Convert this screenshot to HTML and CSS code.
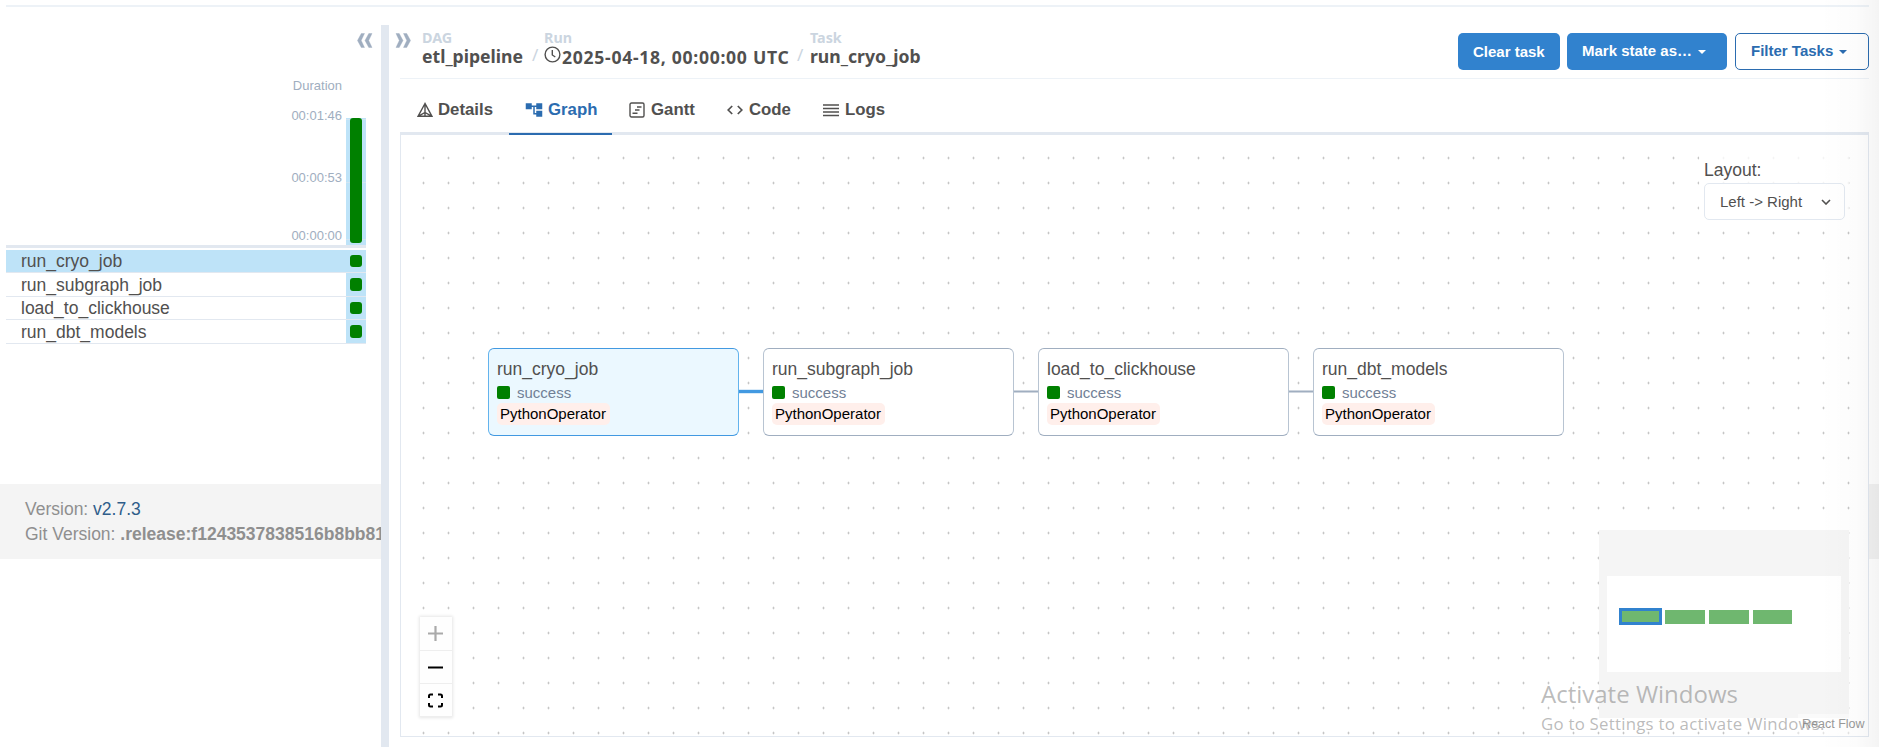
FILE: index.html
```html
<!DOCTYPE html>
<html lang="en">
<head>
<meta charset="utf-8">
<title>etl_pipeline - Graph</title>
<link rel="stylesheet" href="styles.css">
</head>
<body>
<div class="page">
  <div class="top-rule"></div>
  <div class="split">
    <aside class="side">
      <div class="collapse"><svg class="ico-collapse" viewBox="0 0 16 15"><path d="M7.500 .5H4.300L.5 7.500 4.300 14.500H7.500L4.200 7.500zM15 .5H11.800L8 7.500 11.800 14.500H15L11.700 7.500z"/></svg></div>
      <div class="grid-head">
        <div class="durations"><span class="d-title">Duration</span><span class="d-max">00:01:46</span><span class="d-mid">00:00:53</span><span class="d-min">00:00:00</span></div>
        <div class="run-col"><div class="run-bar"></div></div>
      </div>
      <div class="task-list">
        <div class="task selected"><span>run_cryo_job</span><i><b></b></i></div>
        <div class="task low"><span>run_subgraph_job</span><i><b></b></i></div>
        <div class="task"><span>load_to_clickhouse</span><i><b></b></i></div>
        <div class="task low"><span>run_dbt_models</span><i><b></b></i></div>
      </div>
      <footer class="footer"><p>Version: <a>v2.7.3</a></p><p>Git Version: <strong>.release:f1243537838516b8bb81</strong></p></footer>
    </aside>
    <div class="divider"></div>
    <main class="main">
      <header class="header">
        <svg class="ico-expand" viewBox="0 0 16 15"><path d="M1 .5H4.200L8 7.500 4.200 14.500H1L4.300 7.500zM8.500 .5H11.700L15.500 7.500 11.700 14.500H8.500L11.800 7.500z"/></svg>
        <div class="crumb crumb-dag"><small>DAG</small><span>etl_pipeline</span></div>
        <span class="slash">/</span>
        <div class="crumb crumb-run"><small>Run</small><span class="run-date"><svg class="ico-clock" viewBox="0 0 17 17"><circle cx="8.5" cy="8.5" r="7.4"/><path d="M8.3 4v5l3 2"/></svg>2025-04-18, 00:00:00 UTC</span></div>
        <span class="slash">/</span>
        <div class="crumb crumb-task"><small>Task</small><span>run_cryo_job</span></div>
        <div class="actions">
          <button class="btn clear">Clear task</button>
          <button class="btn mark">Mark state as…<i class="caret"></i></button>
          <button class="btn filter">Filter Tasks<i class="caret"></i></button>
        </div>
      </header>
      <nav class="tabs">
        <div class="tab t-details"><svg viewBox="0 0 16 16" class="line"><path d="M8 1.500 1 14.300h14zM8 2v12M1 14.300 8 10.500l7 3.800"/></svg>Details</div>
        <div class="tab t-graph active"><svg viewBox="0 0 24 24"><path d="M23 11V3h-8v3H9V3H1v8h8V8h2v10h4v3h8v-8h-8v3h-2V8h2v3z"/></svg>Graph</div>
        <div class="tab t-gantt"><svg viewBox="0 0 16 16" class="line"><rect x="1" y="1" width="14" height="14" rx="1.5"/><path d="M8 5h4.500M6 8h4.500M3.500 11.300h5"/></svg>Gantt</div>
        <div class="tab t-code"><svg viewBox="0 0 16 16" class="line thick"><path d="M5.200 4 1.200 8l4 4M10.800 4l4 4-4 4"/></svg>Code</div>
        <div class="tab t-logs"><svg viewBox="0 0 16 16" class="line"><path d="M0 3h16M0 6.500h16M0 10h16M0 13.500h16"/></svg>Logs</div>
      </nav>
      <section class="canvas">
        <svg class="edges"><path class="edge on" d="M336.500 256.500h27"/><path class="edge" d="M611 256.500h27M886 256.500h27"/></svg>
        <div class="node n1"><h4>run_cryo_job</h4><p><b></b>success</p><em>PythonOperator</em></div>
        <div class="node n2"><h4>run_subgraph_job</h4><p><b></b>success</p><em>PythonOperator</em></div>
        <div class="node n3"><h4>load_to_clickhouse</h4><p><b></b>success</p><em>PythonOperator</em></div>
        <div class="node n4"><h4>run_dbt_models</h4><p><b></b>success</p><em>PythonOperator</em></div>
        <div class="layout"><label>Layout:</label><div class="select">Left -&gt; Right<svg viewBox="0 0 10 6"><path d="M1 1l4 4 4-4"/></svg></div></div>
        <div class="controls">
          <span><svg viewBox="0 0 15 15"><path class="plus" d="M0 7.500h15M7.500 0v15"/></svg></span>
          <span><svg viewBox="0 0 15 15"><path d="M0 7.500h15"/></svg></span>
          <span><svg viewBox="0 0 15 15"><path d="M1 5V3Q1 1.500 2.500 1.500H5M10 1.500h2.500Q14 1.500 14 3V5M14 10v2Q14 13.500 12.500 13.500H10M5 13.500H2.500Q1 13.500 1 12V10"/></svg></span>
        </div>
        <svg class="minimap" viewBox="0 0 250 188"><rect class="mask" width="250" height="188"/><rect class="view" x="8" y="46" width="234" height="96"/><rect class="mn cur" x="21.500" y="79.500" width="40" height="14"/><rect class="mn" x="66" y="80" width="40" height="14"/><rect class="mn" x="110" y="80" width="40" height="14"/><rect class="mn" x="154" y="80" width="39" height="14"/></svg>
        <div class="attribution">React Flow</div>
      </section>
    </main>
  </div>
  <div class="edge-shade"></div>
  <div class="footer-edge"></div>
  <div class="watermark"><div>Activate Windows</div><p>Go to Settings to activate Windows.</p></div>
</div>
</body>
</html>
```
FILE: styles.css
```css
* { box-sizing: border-box; }
body { margin: 0; background: #fff; color: #51504f; font-family: "Liberation Sans", Arial, sans-serif; font-size: 17.5px; }
p, h4 { margin: 0; font-weight: 400; }
svg { display: block; fill: none; }
.page { position: relative; width: 1879px; height: 747px; overflow: hidden; padding-top: 5px; }
.top-rule { height: 2px; margin: 0 10px 18px 6px; background: #edf2f7; }
.split { display: flex; height: 722px; }

.side { width: 381px; overflow: hidden; flex: none; }
.collapse { padding: 8px 8px 0 0; height: 53px; display: flex; justify-content: flex-end; }
.ico-collapse, .ico-expand { width: 16px; height: 15px; flex: none; fill: #a0aec0; stroke: #a0aec0; stroke-width: .4; }
.grid-head { display: flex; width: 360px; height: 170px; margin-left: 6px; border-bottom: 3px solid #e2e8f0; }
.durations { width: 336px; display: flex; flex-direction: column; align-items: flex-end; font-size: 13px; line-height: 16px; color: #a0aec0; }
.d-max { margin-top: 14px; }
.d-mid { margin-top: 46px; }
.d-min { margin-top: 42px; }
.run-col { width: 20px; height: 127px; margin: 40px 0 0 4px; padding: 0 4px; background: linear-gradient(#d2e5f2, #d2e5f2) 0 1px / 100% 1px no-repeat, linear-gradient(#d2e5f2, #d2e5f2) 0 64px / 100% 1px no-repeat, linear-gradient(#d2e5f2, #d2e5f2) 0 121px / 100% 1px no-repeat, #bee3f8; }
.run-bar { height: 125px; border-radius: 3px; background: green; }
.task-list { width: 360px; margin: 2px 0 0 6px; display: grid; grid-template-rows: 23px 24px 23px 24px; }
.task { display: flex; justify-content: space-between; border-bottom: 1px solid #e2e8f0; padding-left: 15px; line-height: 22px; }
.task i { width: 20px; padding: 5px 4px; background: #bee3f8; }
.task b { display: block; height: 12px; border-radius: 3px; background: green; }
.low { line-height: 24px; }
.low b { height: 13px; }
.selected { background: #bee3f8; }
.footer { height: 75px; margin-top: 140px; padding: 13px 25px 12px; background: #f4f4f4; color: #8f8f8f; line-height: 25px; white-space: nowrap; }
.footer a { color: #2f5d8a; }
.divider { width: 8px; flex: none; background: #e2e8f0; }

.main { width: 1480px; padding-left: 11px; }
.header { position: relative; height: 54px; display: flex; align-items: flex-start; border-bottom: 1px solid #edf2f7; font-family: "Noto Sans", "Open Sans", sans-serif; }
.ico-expand { margin: 8px 0 0 -5px; }
.crumb { height: 45px; padding-top: 4px; font-weight: 700; font-size: 17.6px; white-space: nowrap; }
.crumb small { display: block; height: 15px; font-size: 14.3px; line-height: 18px; color: #cbd5e0; }
.crumb > span { display: flex; line-height: 24px; }
.crumb-dag { margin-left: 11px; width: 110px; }
.crumb-run { width: 253px; margin-left: 3px; }
.run-date { padding-top: 1px; letter-spacing: .7px; }
.crumb-task { margin-left: 4px; }
.slash { width: 9px; padding-top: 18px; line-height: 24px; font-size: 17px; color: #cbd5e0; }
.ico-clock { width: 17px; height: 17px; margin: 1px 1px 0 0; stroke: #51504f; stroke-width: 1.4; flex: none; }
.actions { display: flex; margin: 8px 0 0 auto; }
.btn { height: 37px; border: 0; border-radius: 5px; padding: 0 0 2px; background: #3182ce; color: #fff; font: bold 15px "Liberation Sans", Arial, sans-serif; white-space: nowrap; display: flex; align-items: center; }
.clear { width: 102px; padding: 0 0 0 15px; }
.mark { width: 160px; margin-left: 7px; padding-left: 15px; }
.filter { width: 134px; margin-left: 8px; padding-left: 15px; border: 1px solid #2b6cb0; background: #fff; color: #2b6cb0; }
.caret { margin: 2px 0 0 6px; border: 4.500px solid transparent; border-top-color: currentColor; border-bottom: 0; }

.tabs { display: flex; height: 56px; border-bottom: 3px solid #e2e8f0; font-weight: bold; font-size: 16.8px; }
.tab { display: flex; align-items: center; gap: 5px; height: 56px; padding: 5px 15px 0; white-space: nowrap; }
.tab svg { width: 16px; height: 16px; margin-top: 1px; fill: currentColor; flex: none; }
.tab svg.line { fill: none; stroke: currentColor; stroke-width: 1.4; }
.tab svg.thick { stroke-width: 1.7; }
.t-details { width: 109px; padding-left: 17px; }
.t-graph { width: 103px; }
.tab.t-graph { padding-left: 16px; }
.t-graph svg { width: 18px; height: 18px; }
.t-gantt { width: 98px; padding-left: 17px; gap: 6px; }
.t-code { width: 96px; padding-left: 17px; gap: 6px; }
.t-logs { padding-left: 17px; gap: 6px; }
.active { color: #2b6cb0; border-bottom: 2px solid #2b6cb0; padding-top: 7px; }

.canvas { position: relative; width: 1469px; height: 602px; border: 1px solid #e2e8f0; border-top: 0; background: radial-gradient(circle, #adadad 0.700px, transparent 1.200px) 10px 10.500px / 25px 25px; }
.edges { position: absolute; left: 0; top: 0; width: 1467px; height: 600px; }
.edge { stroke: #a0aec0; stroke-width: 2; }
.edge.on { stroke: #4299e1; stroke-width: 3.4; }
.node { position: absolute; top: 213px; width: 251px; height: 88px; border: 1px solid #a0aec0; border-color: #a0aec0 #b8c4d2; border-radius: 6px; padding: 8px; background: #fff; }
.n1 { left: 87px; background: #ebf8ff; border-color: #4299e1 #63b3ed; }
.n2 { left: 362px; }
.n3 { left: 637px; }
.n4 { left: 912px; }
.node h4 { font-size: 17.500px; line-height: 24px; }
.node p { display: flex; align-items: center; height: 22px; padding-top: 1px; gap: 7px; font-size: 15px; color: #718096; }
.node b { width: 13px; height: 13px; margin-top: -1px; border-radius: 2px; background: green; }
.node em { display: inline-block; font-style: normal; font-size: 15px; line-height: 22px; padding: 0 4px 0 3px; border-radius: 5px; background: #ffefeb; color: #000; vertical-align: top; }
.layout { position: absolute; left: 1298px; top: 15px; width: 150px; height: 75px; padding: 9px 5px; background: rgba(255,255,255,.8); }
.layout label { display: block; height: 24px; line-height: 22px; }
.select { width: 141px; height: 37px; border: 1px solid #e2e8f0; border-radius: 5px; padding: 0 13px 0 15px; display: flex; align-items: center; justify-content: space-between; font-size: 15px; background: #fff; }
.select svg { width: 10px; height: 6px; stroke: #51504f; stroke-width: 1.6; }
.controls { position: absolute; left: 18.500px; top: 482px; width: 32px; box-shadow: 0 0 3px 1px rgba(0,0,0,.1); }
.controls span { display: flex; align-items: center; justify-content: center; height: 33px; background: #fefefe; border-bottom: 1px solid #eee; }
.controls span:first-child { height: 34px; }
.controls svg { width: 15px; height: 15px; stroke: #000; stroke-width: 2; }
.controls .plus { stroke: #aaa; stroke-width: 2.200; }
.minimap { position: absolute; left: 1198px; top: 395px; width: 250px; height: 188px; }
.mask { fill: #f5f5f5; }
.view { fill: #fff; }
.mn { fill: #6fb76f; }
.cur { stroke: #3182ce; stroke-width: 3; }
.attribution { position: absolute; right: 0; bottom: 0; width: 70px; height: 22px; padding-left: 4px; line-height: 20px; font-size: 12.500px; color: #999; background: rgba(255,255,255,.5); white-space: nowrap; }

.edge-shade { position: absolute; right: 0; top: 0; width: 60px; height: 747px; background: linear-gradient(90deg, transparent, rgba(0,0,0,.012) 60%, rgba(0,0,0,.045)); }
.footer-edge { position: absolute; right: 0; top: 484px; width: 10px; height: 75px; background: rgba(0,0,0,.05); }
.watermark { position: absolute; left: 1541px; top: 676px; color: rgba(130,130,130,.55); font-family: "Open Sans", "Noto Sans", sans-serif; white-space: nowrap; }
.watermark div { font-size: 24px; line-height: 36px; }
.watermark p { font-size: 16.8px; line-height: 24px; letter-spacing: .25px; }
```
